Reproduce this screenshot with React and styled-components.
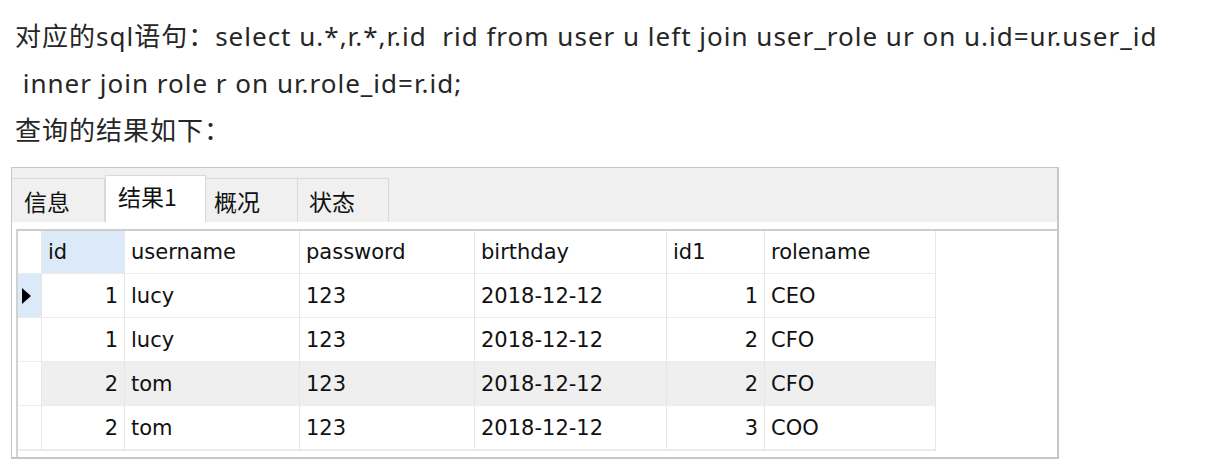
import styled, { createGlobalStyle } from "styled-components";

const Global = createGlobalStyle`
  html, body {
    margin: 0;
    padding: 0;
    background: #ffffff;
  }
`

const Page = styled.div`
  padding: 13px 0 0 11px;
  width: 1220px;
  height: 470px;
  box-sizing: border-box;
`

const Line = styled.p`
  margin: 0;
  padding-left: 4px;
  font-family: "Noto Sans", "Noto Sans CJK SC", sans-serif;
  font-size: 26px;
  letter-spacing: 1px;
  line-height: 47px;
  height: 47px;
  color: #262626;
  white-space: pre;
`

const Panel = styled.div`
  margin-top: 13px;
  width: 1048px;
  height: 292px;
  box-sizing: border-box;
  border: 1px solid #c6c6c6;
  border-right-width: 2px;
  border-bottom-width: 2px;
  background: #f0f0f0;
  display: flex;
  flex-direction: column;
`

const TabBar = styled.div`
  height: 54px;
  display: flex;
  align-items: flex-end;
  flex-shrink: 0;
`

const Tab = styled.div`
  box-sizing: border-box;
  width: ${p => p.$w}px;
  height: ${p => (p.$active ? 47 : 44)}px;
  padding-left: ${p => p.$pad}px;
  display: flex;
  align-items: center;
  font-family: "Noto Sans CJK SC", sans-serif;
  font-size: 23px;
  color: #111111;
  background: ${p => (p.$active ? "#ffffff" : "#f0f0f0")};
  border-top: 1px solid #d9d9d9;
  border-right: 1px solid #d9d9d9;
  ${p => p.$active && "border-left: 1px solid #d9d9d9; padding-bottom: 6px;"}
`

const Content = styled.div`
  flex: 1;
  background: #ffffff;
  padding: 7px 0 0 4px;
  display: flex;
`

const Frame = styled.div`
  flex: 1;
  border-top: 2px solid #cdcdcd;
  border-left: 2px solid #d2d2d2;
`

const Grid = styled.div`
  display: grid;
  grid-template-columns: 24px 83px 175px 175px 192px 98px 171px;
  grid-auto-rows: 44px;
  grid-template-rows: 43px;
  width: 918px;
  border-bottom: 1px solid #ececec;
`

const Cell = styled.div`
  box-sizing: border-box;
  border-right: 1px solid #e6e6e6;
  border-bottom: 1px solid #ececec;
  display: flex;
  align-items: center;
  justify-content: ${p => (p.$num ? "flex-end" : "flex-start")};
  padding: 0 6px;
  font-family: "DejaVu Sans", sans-serif;
  font-size: 21px;
  color: #111111;
  background: ${p => p.$bg || "transparent"};
`

const Arrow = styled.span`
  width: 0;
  height: 0;
  border-top: 8px solid transparent;
  border-bottom: 8px solid transparent;
  border-left: 9px solid #000000;
  margin-left: -2px;
`

const tabs = [
  { label: "信息", w: 93, pad: 12 },
  { label: "结果1", w: 101, pad: 12, active: true },
  { label: "概况", w: 92, pad: 8 },
  { label: "状态", w: 91, pad: 11 },
]

const columns = ["id", "username", "password", "birthday", "id1", "rolename"]

const rows = [
  ["1", "lucy", "123", "2018-12-12", "1", "CEO"],
  ["1", "lucy", "123", "2018-12-12", "2", "CFO"],
  ["2", "tom", "123", "2018-12-12", "2", "CFO"],
  ["2", "tom", "123", "2018-12-12", "3", "COO"],
]

const numeric = [true, false, false, false, true, false]

export default function App() {
  return (
    <Page>
      <Global />
      <Line>对应的sql语句：select u.*,r.*,r.id  rid from user u left join user_role ur on u.id=ur.user_id</Line>
      <Line> inner join role r on ur.role_id=r.id;</Line>
      <Line>查询的结果如下：</Line>
      <Panel>
        <TabBar>
          {tabs.map(t => (
            <Tab key={t.label} $w={t.w} $pad={t.pad} $active={t.active}>{t.label}</Tab>
          ))}
        </TabBar>
        <Content>
          <Frame>
            <Grid>
              <Cell />
              {columns.map((c, i) => (
                <Cell key={c} $bg={i === 0 ? "#dbe9f8" : undefined}>{c}</Cell>
              ))}
              {rows.map((r, ri) => (
                <>
                  <Cell key={"h" + ri} $bg={ri === 0 ? "#dbe9f8" : undefined}>
                    {ri === 0 && <Arrow />}
                  </Cell>
                  {r.map((v, ci) => (
                    <Cell key={ri + "-" + ci} $num={numeric[ci]} $bg={ri === 2 ? "#efefef" : undefined}>{v}</Cell>
                  ))}
                </>
              ))}
            </Grid>
          </Frame>
        </Content>
      </Panel>
    </Page>
  )
}
